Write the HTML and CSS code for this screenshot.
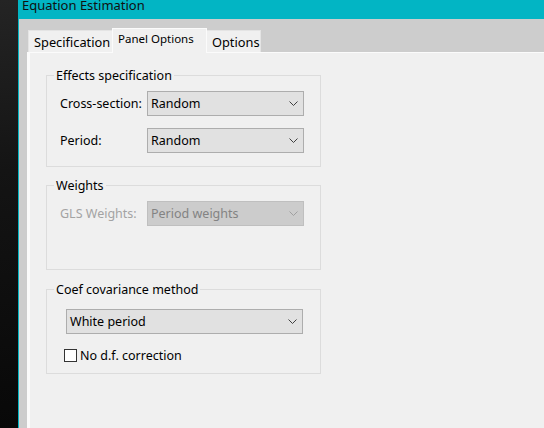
FILE: index.html
```html
<!DOCTYPE html>
<html>
<head>
<meta charset="utf-8">
<link rel="stylesheet" href="styles.css">
</head>
<body>
<div class="screen">
  <div class="desk"></div>
  <div class="window">
    <div class="titlebar"><span class="title">Equation Estimation</span></div>
    <div class="client">
      <div class="tabs">
        <div class="tab first">Specification</div>
        <div class="tab active">Panel Options</div>
        <div class="tab">Options</div>
      </div>
      <div class="panel">
        <div class="group g1">
          <div class="legend">Effects specification</div>
          <div class="row">
            <span class="label">Cross-section:</span>
            <div class="select"><span>Random</span><svg class="chev" viewBox="0 0 9 5"><path d="M0.5 0.5 L4.5 4.5 L8.5 0.5" /></svg></div>
          </div>
          <div class="row">
            <span class="label">Period:</span>
            <div class="select"><span>Random</span><svg class="chev" viewBox="0 0 9 5"><path d="M0.5 0.5 L4.5 4.5 L8.5 0.5" /></svg></div>
          </div>
        </div>
        <div class="group g2">
          <div class="legend">Weights</div>
          <div class="row">
            <span class="label disabled">GLS Weights:</span>
            <div class="select off"><span>Period weights</span><svg class="chev" viewBox="0 0 9 5"><path d="M0.5 0.5 L4.5 4.5 L8.5 0.5" /></svg></div>
          </div>
        </div>
        <div class="group g3">
          <div class="legend">Coef covariance method</div>
          <div class="select wide"><span>White period</span><svg class="chev" viewBox="0 0 9 5"><path d="M0.5 0.5 L4.5 4.5 L8.5 0.5" /></svg></div>
          <label class="check"><span class="box"></span><span>No d.f. correction</span></label>
        </div>
      </div>
    </div>
  </div>
</div>
</body>
</html>
```
FILE: styles.css
```css
html, body {
  margin: 0;
  padding: 0;
  width: 544px;
  height: 428px;
  overflow: hidden;
}
body {
  font-family: "Noto Sans", "Open Sans", sans-serif;
  font-size: 12.5px;
  color: #000;
}
.screen {
  display: flex;
  width: 544px;
  height: 428px;
}
.desk {
  width: 18px;
  flex: none;
  background: linear-gradient(#242424, #141414 40%, #080808);
}
.window {
  flex: 1;
  display: flex;
  flex-direction: column;
  border-left: 1px solid #02b5c4;
  min-width: 0;
}
.titlebar {
  height: 19px;
  flex: none;
  background: #02b5c4;
  overflow: hidden;
  padding-left: 3px;
}
.title {
  display: block;
  margin-top: -5px;
  line-height: 20px;
  font-size: 13px;
  color: #101010;
}
.client {
  flex: 1;
  background: #cdcdcd;
  padding-left: 8px;
  display: flex;
  flex-direction: column;
}
.tabs {
  height: 33px;
  flex: none;
  display: flex;
  align-items: flex-end;
  padding-left: 1px;
}
.tab {
  height: 22px;
  box-sizing: border-box;
  background: #f0f0f0;
  border: 1px solid #e4e4e4;
  border-bottom: none;
  padding: 0 5px;
  line-height: 22px;
  font-size: 12.8px;
  margin-left: -1px;
}
.tab.first {
  width: 85px;
  margin-left: 0;
  padding-left: 5px;
}
.tab.active {
  height: 25px;
  width: 95px;
  margin-bottom: -1px;
  border: 1px solid #fbfbfb;
  border-bottom: none;
  font-size: 11.5px;
  line-height: 20px;
  padding-left: 5px;
  position: relative;
  z-index: 1;
}
.tab:last-child {
  width: 55px;
}
.panel {
  flex: 1;
  background: #f0f0f0;
  border-top: 1px solid #fbfbfb;
  border-left: 3px solid #fbfbfb;
  padding: 21px 0 0 16px;
}
.group {
  width: 275px;
  box-sizing: border-box;
  border: 1px solid #dcdcdc;
}
.g1 { height: 92px; margin-top: 1px; }
.g2 { height: 85px; margin-top: 18px; }
.g3 { height: 85px; margin-top: 19px; }
.legend {
  width: max-content;
  margin: -9px 0 0 7px;
  padding: 0 2px;
  background: #f0f0f0;
  line-height: 17px;
}
.row {
  display: flex;
  align-items: center;
  padding-left: 13px;
  margin-top: 7px;
}
.row + .row {
  margin-top: 12px;
}
.label {
  width: 87px;
  flex: none;
}
.label.disabled {
  color: #a3a3a3;
}
.select {
  width: 157px;
  height: 25px;
  box-sizing: border-box;
  border: 1px solid #adadad;
  background: #e1e1e1;
  display: flex;
  align-items: center;
  justify-content: space-between;
  padding: 0 5px 0 3px;
}
.select.off {
  background: #cccccc;
  border-color: #bfbfbf;
  color: #838383;
}
.select.wide {
  width: 237px;
  margin: 11px 0 0 19px;
}
.chev {
  width: 9px;
  height: 5px;
  fill: none;
  stroke: #404040;
  stroke-width: 1;
}
.select.off .chev {
  stroke: #a0a0a0;
}
.check {
  display: flex;
  align-items: center;
  margin: 13px 0 0 17px;
  gap: 3px;
}
.box {
  width: 13px;
  height: 13px;
  box-sizing: border-box;
  border: 1px solid #333;
  background: #fff;
}
```
